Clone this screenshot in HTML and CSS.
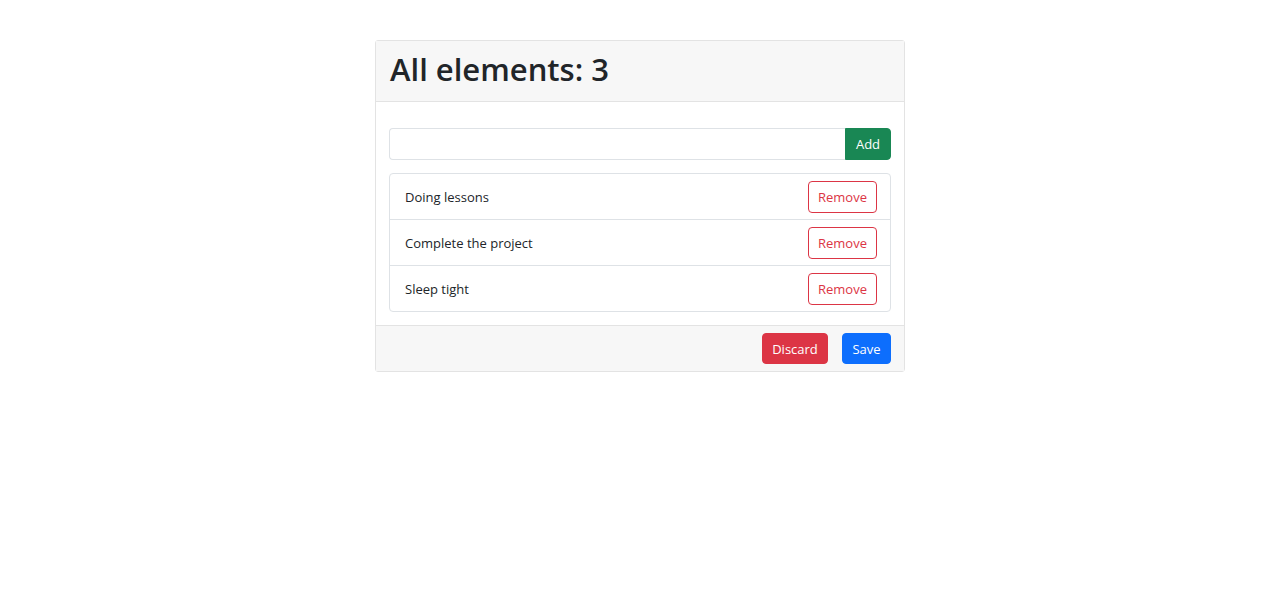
FILE: index.html
```html
<!DOCTYPE html>
<html lang="en">
<head>
<meta charset="utf-8">
<title>All elements</title>
<link rel="stylesheet" href="styles.css">
</head>
<body>
<div class="page">
  <div class="card">
    <div class="card-header">
      <h1 class="title">All elements: 3</h1>
    </div>
    <div class="card-body">
      <div class="input-group">
        <input class="input" type="text">
        <button class="btn btn-success">Add</button>
      </div>
      <ul class="list">
        <li class="list-item"><span>Doing lessons</span><button class="btn btn-outline-danger">Remove</button></li>
        <li class="list-item"><span>Complete the project</span><button class="btn btn-outline-danger">Remove</button></li>
        <li class="list-item"><span>Sleep tight</span><button class="btn btn-outline-danger">Remove</button></li>
      </ul>
    </div>
    <div class="card-footer">
      <button class="btn btn-danger">Discard</button>
      <button class="btn btn-primary">Save</button>
    </div>
  </div>
</div>
</body>
</html>
```
FILE: styles.css
```css
* { box-sizing: border-box; }
html, body { margin: 0; padding: 0; background: #fff; }
body {
  font-family: "Open Sans", "Noto Sans", sans-serif;
  font-size: 13px;
  color: #212529;
}
.page {
  display: flex;
  justify-content: center;
  padding-top: 40px;
}
.card {
  width: 530px;
  border: 1px solid #e3e3e3;
  border-radius: 3px;
  background: #fff;
}
.card-header {
  background: #f7f7f7;
  border-bottom: 1px solid #e3e3e3;
  height: 61px;
  padding: 0 14px 2px;
  display: flex;
  align-items: center;
}
.title {
  margin: 0;
  font-size: 31px;
  font-weight: 600;
  line-height: 1.2;
  color: #212529;
}
.card-body {
  padding: 26px 13px 13px;
}
.input-group {
  display: flex;
  height: 32px;
  margin-bottom: 13px;
}
.input {
  flex: 1;
  height: 32px;
  border: 1px solid #dee2e6;
  border-radius: 4px 0 0 4px;
  border-right: none;
  font: inherit;
  padding: 0 11px;
}
.btn {
  font-family: inherit;
  font-size: 13px;
  line-height: 20px;
  border-radius: 4px;
  border: 1px solid transparent;
  padding: 5px 10px;
  cursor: pointer;
}
.btn-success {
  background: #198754;
  border-color: #198754;
  color: #fff;
  border-radius: 0 4px 4px 0;
  width: 46px;
  padding: 5px 0;
}
.btn-danger {
  background: #dc3545;
  border-color: #dc3545;
  color: #fff;
  height: 31px;
  width: 66px;
  padding: 0;
}
.btn-primary {
  background: #0d6efd;
  border-color: #0d6efd;
  color: #fff;
  height: 31px;
  width: 49px;
  padding: 0;
}
.btn-outline-danger {
  background: #fff;
  border-color: #dc3545;
  color: #dc3545;
  height: 32px;
  width: 69px;
  padding: 0;
}
.list {
  list-style: none;
  margin: 0;
  padding: 0;
  border: 1px solid #dee2e6;
  border-radius: 4px;
}
.list-item {
  display: flex;
  align-items: center;
  justify-content: space-between;
  height: 46px;
  padding: 0 13px 0 15px;
}
.list-item + .list-item {
  border-top: 1px solid #dee2e6;
}
.list-item:first-child { height: 45px; }
.card-footer {
  background: #f7f7f7;
  border-top: 1px solid #e3e3e3;
  padding: 7px 13px;
  display: flex;
  justify-content: flex-end;
  gap: 14px;
}
```
